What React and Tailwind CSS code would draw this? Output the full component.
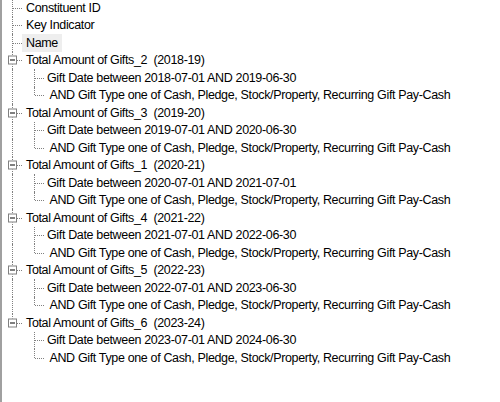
import React from "react";

const groups = [
  { label: "Total Amount of Gifts_2  (2018-19)", from: "2018-07-01", to: "2019-06-30" },
  { label: "Total Amount of Gifts_3  (2019-20)", from: "2019-07-01", to: "2020-06-30" },
  { label: "Total Amount of Gifts_1  (2020-21)", from: "2020-07-01", to: "2021-07-01" },
  { label: "Total Amount of Gifts_4  (2021-22)", from: "2021-07-01", to: "2022-06-30" },
  { label: "Total Amount of Gifts_5  (2022-23)", from: "2022-07-01", to: "2023-06-30" },
  { label: "Total Amount of Gifts_6  (2023-24)", from: "2023-07-01", to: "2024-06-30" },
];

const giftTypes = "Cash, Pledge, Stock/Property, Recurring Gift Pay-Cash";

// one gutter column of the tree: vertical dotted line (full or top half) + optional elbow
const Gutter = ({ width, vertical, elbow, box }) => (
  <div className={`relative h-full shrink-0 ${width}`}>
    {vertical === "full" && (
      <div className="absolute left-[12px] top-0 h-full border-l border-dotted border-[#808080]" />
    )}
    {vertical === "half" && (
      <div className="absolute left-[12px] top-0 h-1/2 border-l border-dotted border-[#808080]" />
    )}
    {elbow && (
      <div className="absolute left-[13px] top-1/2 w-[9px] border-t border-dotted border-[#808080]" />
    )}
    {box && (
      <div className="absolute left-[8px] top-1/2 -translate-y-1/2 w-[9px] h-[9px] border border-[#808080] bg-white flex items-center justify-center">
        <div className="w-[5px] h-px bg-black" />
      </div>
    )}
  </div>
);

const Row = ({ children }) => (
  <div className="flex items-center h-[17.5px]">{children}</div>
);

const Label = ({ children, selected, pad = "px-[4px]" }) => (
  <span
    className={`whitespace-pre h-full flex items-center ${pad} ${
      selected ? "bg-[#eeeeee]" : ""
    }`}
  >
    {children}
  </span>
);

export default function App() {
  return (
    <div
      className="w-[500px] h-[402px] bg-white overflow-hidden border-l-2 border-[#a0a0a0] text-black text-[12.5px] tracking-[-0.35px] leading-none"
      style={{ fontFamily: '"Liberation Sans", Arial, sans-serif' }}
    >
      <div className="-mt-[1px] -ml-[2px]">
        {["Constituent ID", "Key Indicator", "Name"].map((t) => (
          <Row key={t}>
            <Gutter width="w-[22px]" vertical="full" elbow />
            <Label selected={t === "Name"}>{t}</Label>
          </Row>
        ))}
        {groups.map((g, i) => {
          const last = i === groups.length - 1;
          return (
            <React.Fragment key={g.label}>
              <Row>
                <Gutter width="w-[22px]" vertical={last ? "half" : "full"} elbow box />
                <Label>{g.label}</Label>
              </Row>
              <Row>
                <Gutter width="w-[22px]" vertical={last ? null : "full"} />
                <Gutter width="w-[22px]" vertical="full" elbow />
                <Label pad="px-[3px]">{`Gift Date between ${g.from} AND ${g.to}`}</Label>
              </Row>
              <Row>
                <Gutter width="w-[22px]" vertical={last ? null : "full"} />
                <Gutter width="w-[22px]" vertical="half" elbow />
                <Label pad="px-[3px]">{` AND Gift Type one of ${giftTypes}`}</Label>
              </Row>
            </React.Fragment>
          );
        })}
      </div>
    </div>
  );
}
